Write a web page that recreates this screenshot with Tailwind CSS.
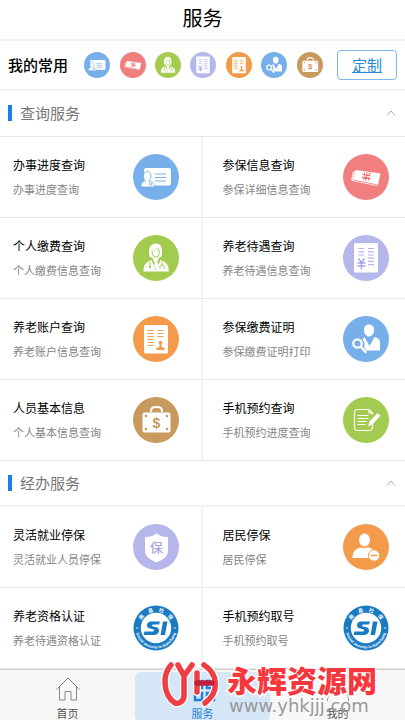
<!DOCTYPE html>
<html lang="zh-CN">
<head>
  <meta charset="UTF-8">
  <meta name="viewport" content="width=device-width, initial-scale=1.0">
  <title>服务</title>
  <script src="https://cdn.jsdelivr.net/npm/@tailwindcss/browser@4"></script>
</head>
<body class="bg-white font-['Noto_Sans_CJK_SC',sans-serif] text-black">

  <!-- Icon sprite -->
  <svg class="hidden" xmlns="http://www.w3.org/2000/svg">
    <symbol id="icon-progress" viewBox="0 0 46 46">
      <circle cx="23" cy="23" r="23" fill="#76afe9"/>
      <rect x="11" y="14" width="27" height="17.500" rx="2" fill="#fff"/>
      <path d="M22 20h11M22 23.500h11M22 27h11" stroke="#76afe9" stroke-width="1.200"/>
      <path d="M8 33c0-4 1-5 4.500-6-1.500-2-2-3-2-5 0-3 1.500-4.500 3.800-4.500S18 19 18 22c0 2-.5 3-2 5 4 1 5.500 2 5.500 6z" fill="#fff" stroke="#76afe9" stroke-width=".9"/>
      <circle cx="17.500" cy="30" r="1.300" fill="none" stroke="#76afe9" stroke-width=".8"/>
    </symbol>
    <symbol id="icon-money" viewBox="0 0 46 46">
      <circle cx="23" cy="23" r="23" fill="#f17f80"/>
      <path d="M12.500 16 37.500 19.500 35 30.500 10 25.500z" fill="#fff"/>
      <path d="M11.500 17 9 26.500 33.500 31.500 35.500 30M10.500 17.500 8.500 26" fill="none" stroke="#fff" stroke-width=".8"/>
      <path d="M19.500 20.500l8 1.500M19 23l8.500 1.500M24 18.500l-1.500 8M21 18.500l1 3M27.500 19l-2.500 3M22 23l-2 2.500M25 23.500l1 3" stroke="#e8696b" stroke-width="1.100"/>
    </symbol>
    <symbol id="icon-doctor" viewBox="0 0 46 46">
      <circle cx="23" cy="23" r="23" fill="#a3cb4f"/>
      <path d="M16.500 22c-1.500-8 .5-13 6-13.500 6-.2 7.500 5 6 13l-3 1.500-.2 2.500L23 28l-3-2.500-.5-3z" fill="#fff"/>
      <path d="M18.500 15.500c3 0 5-1 6.500-2.500 1 1.500 1.500 2 1.800 3 0 4.500-1.500 6.500-4 6.500s-4-2.500-4.300-7z" fill="#a3cb4f"/>
      <path d="M19.500 15.500c2.500 0 4-.8 5.200-1.800.6 1 1 1.500 1.100 2.500 0 3.500-1 5.300-3 5.300s-3.300-2-3.300-6z" fill="#fff"/>
      <path d="M10.500 36.500c0-7 2-9 8-11.500l4.500 11 4.500-11c6 2.500 8.300 4.500 8.300 11.500z" fill="#fff"/>
      <path d="M22 27h2.500l1 3-2 6-2.500-6z" fill="#fff"/>
      <path d="M17 26.500v5M29 26.500v4M27 34v-2.500c0-2 4-2 4 0V34" fill="none" stroke="#a3cb4f" stroke-width="1"/>
      <circle cx="17" cy="32" r="1.200" fill="#a3cb4f"/>
    </symbol>
    <symbol id="icon-pension" viewBox="0 0 46 46">
      <circle cx="23" cy="23" r="23" fill="#b5b6ea"/>
      <rect x="11" y="8" width="24" height="29.500" rx="1.500" fill="#fff"/>
      <path d="M15.500 13.500h5.500M15.500 16.800h5.500M15.500 20h5.500M25 13.500h6M25 16.800h6M25 20h6M25 23.200h6M25 26.400h6M25 29.600h6" stroke="#b5b6ea" stroke-width="1.200"/>
      <path d="M14.500 28h8M14.500 31h8M18.500 27.500v7M15.500 23.500l3 4 3-4" fill="none" stroke="#a5a6e0" stroke-width="1.400"/>
    </symbol>
    <symbol id="icon-account" viewBox="0 0 46 46">
      <circle cx="23" cy="23" r="23" fill="#f39b4b"/>
      <rect x="11" y="9" width="24" height="28.500" rx="1.500" fill="#fff"/>
      <path d="M14.500 14.500h6M14.500 17.500h6M14.500 20.500h6M14.500 23.500h6M14.500 26.500h6M14.500 29.500h6M24.500 14.500h6M24.500 17.500h6M24.500 20.500h6" stroke="#f39b4b" stroke-width="1.200"/>
      <circle cx="27.500" cy="26.500" r="1.800" fill="#f39b4b"/>
      <path d="M26.700 27h1.600l.5 4.500h2.700V34h-8v-2.500h2.700z" fill="#f39b4b"/>
    </symbol>
    <symbol id="icon-search-user" viewBox="0 0 46 46">
      <circle cx="23" cy="23" r="23" fill="#76afe9"/>
      <path d="M26 8.500c3.500 0 5.200 2.500 5 6s-2.500 6-5 6-4.800-2.500-5-6 1.500-6 5-6z" fill="#fff"/>
      <path d="M21.500 21 26.500 30l5-9c4 1 5.500 2.500 5.500 6v7.500H23l-2-4c1-2 1-4-1.500-7z" fill="#fff"/>
      <circle cx="14.500" cy="27.500" r="4.200" fill="none" stroke="#fff" stroke-width="2.300"/>
      <path d="M18 31l4.500 5" stroke="#fff" stroke-width="2.500" stroke-linecap="round"/>
    </symbol>
    <symbol id="icon-briefcase" viewBox="0 0 46 46">
      <circle cx="23" cy="23" r="23" fill="#c99a5d"/>
      <path d="M18 15c0-4 1-5 5.500-5s5.500 1 5.500 5" fill="none" stroke="#fff" stroke-width="2"/>
      <rect x="9.500" y="15.500" width="28" height="20" rx="2" fill="#fff"/>
      <g fill="#c99a5d">
        <circle cx="13" cy="19" r="1.300"/><circle cx="34" cy="19" r="1.300"/>
        <circle cx="13" cy="32" r="1.300"/><circle cx="34" cy="32" r="1.300"/>
        <text x="23.500" y="30.500" text-anchor="middle" font-family="Liberation Sans" font-weight="700" font-size="14">$</text>
      </g>
    </symbol>
    <symbol id="icon-note" viewBox="0 0 46 46">
      <circle cx="23" cy="23" r="23" fill="#a3cb4f"/>
      <path d="M29.500 24.500V30c0 2.500-1 3.500-3.500 3.500H15c-2.500 0-3.500-1-3.500-3.500V16c0-2.500 1-3.500 3.500-3.500h11l3.500 3.500v2M26 12.500V16h3.500" fill="none" stroke="#fff" stroke-width="1.200"/>
      <path d="M14.500 18.500h11M14.500 21.500h11M14.500 24.500h9M14.500 27.500h8" stroke="#fff" stroke-width="1.100"/>
      <path d="M25 29.500l1.500-5 8-8.500 3 2.500-8 9z" fill="#fff"/>
    </symbol>
    <symbol id="icon-shield" viewBox="0 0 46 46">
      <circle cx="23" cy="23" r="23" fill="#b5b6ea"/>
      <path d="M23.500 9c2 2.500 6 4 11.500 4v14c0 5.500-5 8.500-11.500 11.500C17 35.500 12 32.500 12 27V13c5.500 0 9.500-1.500 11.500-4z" fill="#fff"/>
      <text x="23.500" y="28" text-anchor="middle" font-size="13" font-weight="500" fill="#a5a6e0">保</text>
    </symbol>
    <symbol id="icon-user-minus" viewBox="0 0 46 46">
      <circle cx="23" cy="23" r="23" fill="#f39b4b"/>
      <ellipse cx="21.500" cy="16" rx="5.500" ry="6.500" fill="#fff"/>
      <path d="M9.500 34c0-7 3-9.500 9-10.500 2 1 4 1 6 0 4 .5 6 1.500 8 5V34z" fill="#fff"/>
      <circle cx="31" cy="31.500" r="5.700" fill="#fff" stroke="#f39b4b" stroke-width="1"/>
      <path d="M27.500 31.500h7" stroke="#f39b4b" stroke-width="1.500"/>
    </symbol>
    <symbol id="icon-si" viewBox="0 0 46 46">
      <circle cx="23" cy="23" r="22.500" fill="#1a7bc3"/>
      <circle cx="23" cy="23" r="15.200" fill="#fff"/>
      <path id="arc-top" d="M6.500 23a16.500 16.500 0 0 1 33 0" fill="none"/>
      <path id="arc-bottom" d="M2.500 23a20.500 20.500 0 0 0 41 0" fill="none"/>
      <g fill="#fff" font-weight="700">
        <text font-size="5"><textPath href="#arc-top" startOffset="50%" text-anchor="middle">南　昌　社　保</textPath></text>
        <text font-size="4" font-family="Liberation Sans"><textPath href="#arc-bottom" startOffset="50%" text-anchor="middle">Social security in Nanchang</textPath></text>
        <circle cx="4" cy="23" r=".8"/><circle cx="42" cy="23" r=".8"/>
      </g>
      <path d="M27 16.500H19.500c-4 0-5.500 1.500-5.500 3.800 0 2 1 2.700 3 3.200l3 .7c1.500.4 1.500 2.300-.5 2.300H11.500L10.500 30H20c4 0 6-2 6-4.500 0-2-1-3-3-3.500l-3-.6c-1.500-.4-1-1.900.5-1.900h5.500zM30 16.500h4.500L32 30h-4.500z" fill="#1a7bc3"/>
    </symbol>
  </svg>

  <div class="flex min-h-screen flex-col">

    <!-- Title bar -->
    <header class="border-b-2 border-[#f0f0f0] pt-[3px] pb-1.5 text-center">
      <h1 class="text-[20px] leading-[30px]">服务</h1>
    </header>

    <!-- Favourites -->
    <section class="flex items-center border-b-2 border-[#f0f0f0] p-2">
      <h2 class="text-[15px] leading-8 font-medium">我的常用</h2>
      <div class="flex flex-1 items-center justify-between pr-3.5 pl-4">
        <a href="#" aria-label="办事进度查询"><svg class="size-[26px]"><use href="#icon-progress"/></svg></a>
        <a href="#" aria-label="参保信息查询"><svg class="size-[26px]"><use href="#icon-money"/></svg></a>
        <a href="#" aria-label="个人缴费查询"><svg class="size-[26px]"><use href="#icon-doctor"/></svg></a>
        <a href="#" aria-label="养老待遇查询"><svg class="size-[26px]"><use href="#icon-pension"/></svg></a>
        <a href="#" aria-label="养老账户查询"><svg class="size-[26px]"><use href="#icon-account"/></svg></a>
        <a href="#" aria-label="参保缴费证明"><svg class="size-[26px]"><use href="#icon-search-user"/></svg></a>
        <a href="#" aria-label="人员基本信息"><svg class="size-[26px]"><use href="#icon-briefcase"/></svg></a>
      </div>
      <button class="rounded-sm border border-[#7fb8e6] px-3.5 text-[15px] leading-7 text-[#2488d8] underline">定制</button>
    </section>

    <main class="flex-1">
      <!-- Query services -->
      <section>
        <button class="flex w-full items-center border-b border-[#e8e8e8] pt-2.5 pb-3 pr-2 pl-2 text-left">
          <span class="h-4 w-1 bg-[#177fe8]"></span>
          <span class="ml-2 flex-1 text-[15px] leading-[23px] text-[#777]">查询服务</span>
          <svg class="h-3 w-3" viewBox="0 0 12 12" fill="none" stroke="#aaa"><path d="M2 8.500 6 4l4 4.500"/></svg>
        </button>
        <div class="grid grid-cols-2">
          <a href="#" class="flex items-center justify-between border-r-2 border-b border-r-[#f3f3f3] border-b-[#e8e8e8] py-4 pr-[22px] pl-[13px]">
            <div>
              <h3 class="text-[12px] leading-6 text-black">办事进度查询</h3>
              <p class="text-[11px] leading-6 text-[#858585]">办事进度查询</p>
            </div>
            <svg class="size-[46px]"><use href="#icon-progress"/></svg>
          </a>
          <a href="#" class="flex items-center justify-between border-b border-[#e8e8e8] py-4 pr-4 pl-5">
            <div>
              <h3 class="text-[12px] leading-6 text-black">参保信息查询</h3>
              <p class="text-[11px] leading-6 text-[#858585]">参保详细信息查询</p>
            </div>
            <svg class="size-[46px]"><use href="#icon-money"/></svg>
          </a>
          <a href="#" class="flex items-center justify-between border-r-2 border-b border-r-[#f3f3f3] border-b-[#e8e8e8] py-4 pr-[22px] pl-[13px]">
            <div>
              <h3 class="text-[12px] leading-6 text-black">个人缴费查询</h3>
              <p class="text-[11px] leading-6 text-[#858585]">个人缴费信息查询</p>
            </div>
            <svg class="size-[46px]"><use href="#icon-doctor"/></svg>
          </a>
          <a href="#" class="flex items-center justify-between border-b border-[#e8e8e8] py-4 pr-4 pl-5">
            <div>
              <h3 class="text-[12px] leading-6 text-black">养老待遇查询</h3>
              <p class="text-[11px] leading-6 text-[#858585]">养老待遇信息查询</p>
            </div>
            <svg class="size-[46px]"><use href="#icon-pension"/></svg>
          </a>
          <a href="#" class="flex items-center justify-between border-r-2 border-b border-r-[#f3f3f3] border-b-[#e8e8e8] py-4 pr-[22px] pl-[13px]">
            <div>
              <h3 class="text-[12px] leading-6 text-black">养老账户查询</h3>
              <p class="text-[11px] leading-6 text-[#858585]">养老账户信息查询</p>
            </div>
            <svg class="size-[46px]"><use href="#icon-account"/></svg>
          </a>
          <a href="#" class="flex items-center justify-between border-b border-[#e8e8e8] py-4 pr-4 pl-5">
            <div>
              <h3 class="text-[12px] leading-6 text-black">参保缴费证明</h3>
              <p class="text-[11px] leading-6 text-[#858585]">参保缴费证明打印</p>
            </div>
            <svg class="size-[46px]"><use href="#icon-search-user"/></svg>
          </a>
          <a href="#" class="flex items-center justify-between border-r-2 border-b border-r-[#f3f3f3] border-b-[#e8e8e8] py-4 pr-[22px] pl-[13px]">
            <div>
              <h3 class="text-[12px] leading-6 text-black">人员基本信息</h3>
              <p class="text-[11px] leading-6 text-[#858585]">个人基本信息查询</p>
            </div>
            <svg class="size-[46px]"><use href="#icon-briefcase"/></svg>
          </a>
          <a href="#" class="flex items-center justify-between border-b border-[#e8e8e8] py-4 pr-4 pl-5">
            <div>
              <h3 class="text-[12px] leading-6 text-black">手机预约查询</h3>
              <p class="text-[11px] leading-6 text-[#858585]">手机预约进度查询</p>
            </div>
            <svg class="size-[46px]"><use href="#icon-note"/></svg>
          </a>
        </div>
      </section>

      <!-- Handling services -->
      <section>
        <button class="flex w-full items-center border-b-2 border-[#f0f0f0] pt-2.5 pb-[11px] pr-2 pl-2 text-left">
          <span class="h-4 w-1 bg-[#177fe8]"></span>
          <span class="ml-2 flex-1 text-[15px] leading-[23px] text-[#777]">经办服务</span>
          <svg class="h-3 w-3" viewBox="0 0 12 12" fill="none" stroke="#aaa"><path d="M2 8.500 6 4l4 4.500"/></svg>
        </button>
        <div class="grid grid-cols-2">
          <a href="#" class="flex items-center justify-between border-r-2 border-b border-r-[#f3f3f3] border-b-[#e8e8e8] py-4 pr-[22px] pl-[13px]">
            <div>
              <h3 class="text-[12px] leading-6 text-black">灵活就业停保</h3>
              <p class="text-[11px] leading-6 text-[#858585]">灵活就业人员停保</p>
            </div>
            <svg class="size-[46px]"><use href="#icon-shield"/></svg>
          </a>
          <a href="#" class="flex items-center justify-between border-b border-[#e8e8e8] py-4 pr-4 pl-5">
            <div>
              <h3 class="text-[12px] leading-6 text-black">居民停保</h3>
              <p class="text-[11px] leading-6 text-[#858585]">居民停保</p>
            </div>
            <svg class="size-[46px]"><use href="#icon-user-minus"/></svg>
          </a>
          <a href="#" class="flex items-center justify-between border-r-2 border-b border-r-[#f3f3f3] border-b-[#e8e8e8] py-4 pr-[22px] pl-[13px]">
            <div>
              <h3 class="text-[12px] leading-6 text-black">养老资格认证</h3>
              <p class="text-[11px] leading-6 text-[#858585]">养老待遇资格认证</p>
            </div>
            <svg class="size-[46px]"><use href="#icon-si"/></svg>
          </a>
          <a href="#" class="flex items-center justify-between border-b border-[#e8e8e8] py-4 pr-4 pl-5">
            <div>
              <h3 class="text-[12px] leading-6 text-black">手机预约取号</h3>
              <p class="text-[11px] leading-6 text-[#858585]">手机预约取号</p>
            </div>
            <svg class="size-[46px]"><use href="#icon-si"/></svg>
          </a>
        </div>
      </section>
    </main>

    <!-- Tab bar -->
    <nav class="sticky bottom-0 grid grid-cols-3 border-t border-[#ccc] bg-[#f7f7f7] pt-0.5 text-[11px] leading-3 text-[#555]">
      <a href="#" class="flex flex-col items-center pt-1">
        <svg class="size-[26px]" viewBox="0 0 26 26" fill="none" stroke="#888"><path d="M1.500 13.500 13 2l11.500 11.500M4.500 11v13H10v-8.500h6V24h5.500V11"/></svg>
        <span class="mt-[5px] mb-[3px]">首页</span>
      </a>
      <a href="#" class="flex flex-col items-center rounded-md bg-[#d5e6f6] pt-1 text-[#1f83d6]">
        <svg class="size-[26px]" viewBox="0 0 26 26" fill="none" stroke="#1e7fe8" stroke-width="2.500"><path d="M5 5h7v7H5zM17 5h7v7h-7zM5 17h7v7H5zM17 17h7v7h-7z"/></svg>
        <span class="mt-[5px] mb-[3px]">服务</span>
      </a>
      <a href="#" class="flex flex-col items-center pt-1">
        <svg class="size-[26px]" viewBox="0 0 26 26" fill="none" stroke="#999"><circle cx="13" cy="7.500" r="5.500"/><path d="M2.500 25c0-7 4-11.500 10.500-11.500S23.500 18 23.500 25"/></svg>
        <span class="mt-[5px] mb-[3px]">我的</span>
      </a>

      <!-- Site watermark -->
      <div class="pointer-events-none absolute -top-3 right-7 flex items-start gap-2">
        <svg class="h-[52px] w-[58px]" viewBox="0 0 58 52" fill="none" stroke-linecap="round" stroke-linejoin="round">
          <g stroke="#fff" stroke-width="8">
            <path d="M10 7C1 17 2 37 14 45M17 7l6 11 8-11M23 18v19c0 6-4 9-9 8"/>
            <path d="M36 15v19M43 7c14 9 16 27 1 38"/>
          </g>
          <g stroke="#ef3e43" stroke-width="5.500">
            <path d="M10 7C1 17 2 37 14 45M17 7l6 11 8-11M23 18v19c0 6-4 9-9 8"/>
            <path d="M36 15v19M43 7c14 9 16 27 1 38"/>
            <path d="M36 25h15" stroke="#c0203f"/>
          </g>
        </svg>
        <div>
          <p class="text-[30px] leading-[42px] font-black text-[#f5383e] [-webkit-text-stroke:3px_white] [paint-order:stroke_fill]">永辉资源网</p>
          <p class="-mt-1 pl-0.5 font-['DejaVu_Sans',sans-serif] text-[18px] leading-5 text-[#999]">www.yhkjjj.com</p>
        </div>
      </div>
    </nav>
  </div>
</body>
</html>
